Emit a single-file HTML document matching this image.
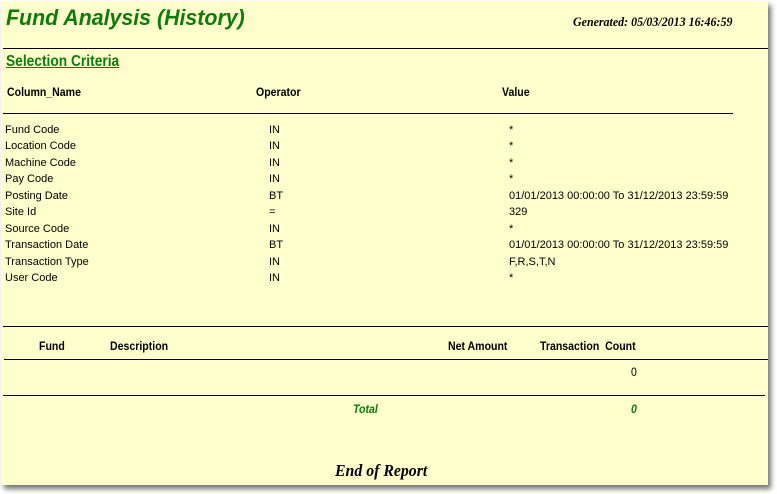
<!DOCTYPE html>
<html><head><meta charset="utf-8"><style>
html,body{margin:0;padding:0;width:777px;height:494px;background:#fff;overflow:hidden;position:relative}
#pg{position:absolute;left:1px;top:1px;width:767px;height:484px;background:#ffffcc;box-shadow:3px 4px 5px rgba(0,0,0,0.55)}
.t{position:absolute;white-space:nowrap;font-family:"Liberation Sans",sans-serif;line-height:1}
.n{font-size:11px;color:#000}
.h{font-size:12px;font-weight:bold;transform:scaleX(0.88);transform-origin:left top}
.l{position:absolute;height:1px;background:#000}
</style></head><body><div id="pg"></div>
<div class="t" style="left:6px;top:7px;font-size:22px;font-weight:bold;font-style:italic;color:#0a7d0a;transform:scaleX(0.97);transform-origin:left top">Fund Analysis (History)</div>
<div class="t" style="left:573px;top:15px;font-family:'Liberation Serif',serif;font-size:13px;font-weight:bold;font-style:italic;transform:scaleX(0.92);transform-origin:left top">Generated: 05/03/2013 16:46:59</div>
<div class="l" style="left:3px;top:48px;width:765px"></div>
<div class="t" style="left:6px;top:54px;font-size:16px;font-weight:bold;color:#0a7d0a;text-decoration:underline;transform:scaleX(0.86);transform-origin:left top">Selection Criteria</div>
<div class="t h" style="left:7px;top:86px">Column_Name</div>
<div class="t h" style="left:256px;top:86px">Operator</div>
<div class="t h" style="left:502px;top:86px">Value</div>
<div class="l" style="left:3px;top:113px;width:730px"></div>
<div class="t n" style="left:5px;top:122px;line-height:16.45px">Fund Code<br>Location Code<br>Machine Code<br>Pay Code<br>Posting Date<br>Site Id<br>Source Code<br>Transaction Date<br>Transaction Type<br>User Code</div>
<div class="t n" style="left:269px;top:122px;line-height:16.45px">IN<br>IN<br>IN<br>IN<br>BT<br>=<br>IN<br>BT<br>IN<br>IN</div>
<div class="t n" style="left:509px;top:122px;line-height:16.45px">*<br>*<br>*<br>*<br>01/01/2013 00:00:00 To 31/12/2013 23:59:59<br>329<br>*<br>01/01/2013 00:00:00 To 31/12/2013 23:59:59<br>F,R,S,T,N<br>*</div>
<div class="l" style="left:3px;top:326px;width:765px"></div>
<div class="t h" style="left:39px;top:340px">Fund</div>
<div class="t h" style="left:110px;top:340px">Description</div>
<div class="t h" style="left:448px;top:340px">Net Amount</div>
<div class="t h" style="left:540px;top:340px">Transaction&nbsp; Count</div>
<div class="l" style="left:4px;top:359px;width:764px"></div>
<div class="t h" style="left:631px;top:366px;font-weight:normal">0</div>
<div class="l" style="left:3px;top:395px;width:762px"></div>
<div class="t h" style="left:353px;top:403px;color:#0a7d0a;font-style:italic">Total</div>
<div class="t h" style="left:631px;top:403px;color:#0a7d0a;font-style:italic">0</div>
<div class="t" style="left:335px;top:462px;font-family:'Liberation Serif',serif;font-size:17px;font-weight:bold;font-style:italic;transform:scaleX(0.93);transform-origin:left top">End of Report</div>
</body></html>
